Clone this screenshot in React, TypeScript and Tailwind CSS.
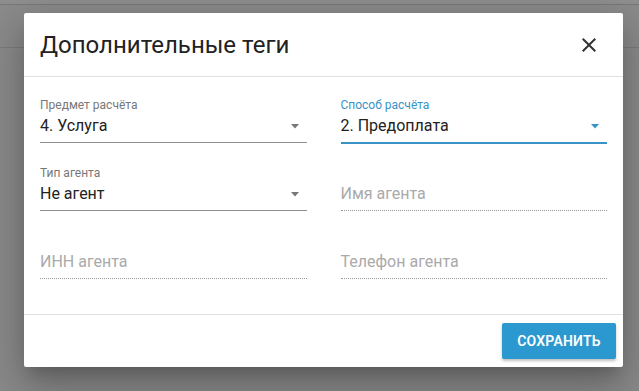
import React from "react"

const font = { fontFamily: "Roboto, 'Noto Sans', sans-serif" }

interface SelectProps {
  label: string
  value: string
  active?: boolean
}

const SelectField: React.FC<SelectProps> = ({ label, value, active }) => (
  <div className="flex flex-col">
    <span
      className={`text-[12px] leading-4 ${active ? "text-[#3a93c6]" : "text-[#777]"}`}
    >
      {label}
    </span>
    <div
      className={`mt-px flex items-center justify-between pb-1 ${
        active ? "border-b-2 border-[#3a93c6] -mb-px" : "border-b border-[#8f8f8f]"
      }`}
    >
      <span className="text-[16px] leading-6 text-[#222]">{value}</span>
      <svg width="10" height="5" viewBox="0 0 10 5" className="mr-[7px]">
        <path d="M1 0h8L5 4.5z" fill={active ? "#3a93c6" : "#777"} />
      </svg>
    </div>
  </div>
)

const TextField: React.FC<{ placeholder: string }> = ({ placeholder }) => (
  <div className="flex flex-col pt-[17px]">
    <div className="pb-1 border-b border-dotted border-[#9a9a9a]">
      <span className="text-[16px] leading-6 text-[#aaa]">{placeholder}</span>
    </div>
  </div>
)

export default function App() {
  return (
    <div className="relative w-[639px] h-[391px] overflow-hidden bg-[#8b8b8b]" style={font}>
      {/* page behind the overlay */}
      <div className="h-[5px] bg-[#8f8f8f] border-b border-[#777]" />
      <div className="h-[43px] border-b border-[#7c7c7c]" />

      <div className="absolute left-[24px] top-[13px] w-[599px] h-[354px] bg-white rounded-[2px] flex flex-col shadow-[0_11px_15px_-7px_rgba(0,0,0,0.2),0_24px_38px_3px_rgba(0,0,0,0.14),0_9px_46px_8px_rgba(0,0,0,0.12)]">
        <div className="h-16 shrink-0 flex items-center justify-between pl-4 pr-[22px] border-b border-[#e0e0e0]">
          <h2 className="text-[24px] leading-8 text-[#222] font-normal">Дополнительные теги</h2>
          <svg width="24" height="24" viewBox="0 0 24 24">
            <path
              d="M19 6.41L17.59 5 12 10.59 6.41 5 5 6.41 10.59 12 5 17.59 6.41 19 12 13.41 17.59 19 19 17.59 13.41 12z"
              fill="#333"
            />
          </svg>
        </div>

        <div className="flex-1 px-4 pt-[20px] grid grid-cols-2 gap-x-[34px] gap-y-[22px] content-start">
          <SelectField label="Предмет расчёта" value="4. Услуга" />
          <SelectField label="Способ расчёта" value="2. Предоплата" active />
          <SelectField label="Тип агента" value="Не агент" />
          <TextField placeholder="Имя агента" />
          <TextField placeholder="ИНН агента" />
          <TextField placeholder="Телефон агента" />
        </div>

        <div className="h-[53px] shrink-0 border-t border-[#e0e0e0] flex items-start justify-end pt-2 pr-[7px]">
          <button className="h-9 w-[114px] rounded-[2px] bg-[#2b98cf] text-white text-[14px] font-semibold tracking-[0.2px] shadow-[0_2px_3px_rgba(0,0,0,0.25)]">
            СОХРАНИТЬ
          </button>
        </div>
      </div>
    </div>
  )
}
